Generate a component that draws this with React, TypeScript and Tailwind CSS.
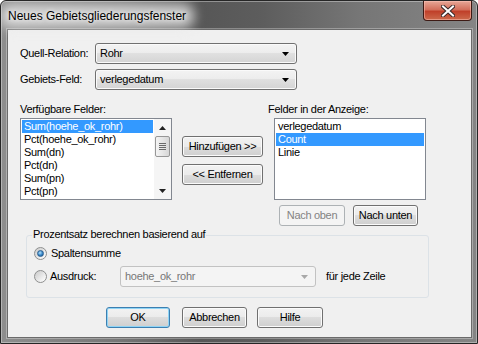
import type { ReactNode } from 'react'

function Arrow({ up = false, color = '#000' }: { up?: boolean; color?: string }) {
  return (
    <svg width="7" height="4" viewBox="0 0 7 4">
      <path d={up ? 'M0 4H7L3.5 0Z' : 'M0 0H7L3.5 4Z'} fill={color} />
    </svg>
  )
}

function Combo({ value, className = '', disabled = false }: { value: string; className?: string; disabled?: boolean }) {
  return (
    <div
      className={`flex h-[21px] items-center justify-between rounded-[3px] border pl-[4px] pr-[7px] ${
        disabled
          ? 'border-[#c2c2c2] bg-[#f4f4f4] text-[#777]'
          : 'border-[#707070] bg-[linear-gradient(#f3f3f3,#ececec_50%,#e0e0e0_50%,#d4d4d4)] text-black shadow-[inset_0_0_0_1px_#fafafa]'
      } ${className}`}
    >
      <span>{value}</span>
      <Arrow color={disabled ? '#a8a8a8' : '#000'} />
    </div>
  )
}

function Btn({ children, className = '', disabled = false, primary = false }: { children: ReactNode; className?: string; disabled?: boolean; primary?: boolean }) {
  const tone = disabled
    ? 'border-[#adb2b5] bg-[#f4f4f4] text-[#838383]'
    : primary
      ? 'border-[#3c7fb1] bg-[linear-gradient(#f2f2f2,#ebebeb_50%,#dddddd_50%,#cfcfcf)] shadow-[inset_0_0_0_1px_#8fd4f5] text-black'
      : 'border-[#707070] bg-[linear-gradient(#f2f2f2,#ebebeb_50%,#dddddd_50%,#cfcfcf)] shadow-[inset_0_0_0_1px_#fbfbfb] text-black'
  return (
    <div className={`flex h-[21px] items-center justify-center rounded-[3px] border ${tone} ${className}`}>{children}</div>
  )
}

function Radio({ checked = false }: { checked?: boolean }) {
  return (
    <span className="flex h-[13px] w-[13px] shrink-0 items-center justify-center rounded-full border border-[#8e8f8f] bg-[linear-gradient(135deg,#c9c9c9,#f4f4f4_75%,#ffffff)]">
      {checked && (
        <span className="h-[7px] w-[7px] rounded-full border border-[#2b5f8f] bg-[radial-gradient(circle_at_40%_35%,#b5e2fb,#3585c8_55%,#174e80)]" />
      )}
    </span>
  )
}

function ScrollBar() {
  return (
    <div className="flex w-[17px] flex-col bg-[#f5f5f5]">
      <div className="flex h-[17px] items-center justify-center">
        <Arrow up color="#222" />
      </div>
      <div className="mx-auto flex h-[21px] w-[15px] flex-col items-center justify-center gap-[1px] rounded-[2px] border border-[#979797] bg-[linear-gradient(90deg,#f4f4f4,#e6e6e6_50%,#d6d6d6)]">
        <span className="h-px w-[7px] bg-[#6a6a6a]" />
        <span className="h-px w-[7px] bg-[#6a6a6a]" />
        <span className="h-px w-[7px] bg-[#6a6a6a]" />
        <span className="h-px w-[7px] bg-[#6a6a6a]" />
      </div>
      <div className="flex-1" />
      <div className="flex h-[17px] items-center justify-center">
        <Arrow color="#222" />
      </div>
    </div>
  )
}

function ListBox({ items, selected, scroll = false, className = '' }: { items: string[]; selected: number; scroll?: boolean; className?: string }) {
  return (
    <div className={`flex h-[82px] w-[152px] border border-[#828790] bg-white ${className}`}>
      <div className="flex-1 overflow-hidden p-px">
        {items.map((it, i) => (
          <div key={it} className={`h-[13px] whitespace-nowrap pl-[2px] leading-[13px] ${i === selected ? 'bg-[#3399ff] text-white' : 'text-black'}`}>
            {it}
          </div>
        ))}
      </div>
      {scroll && <ScrollBar />}
    </div>
  )
}

export default function App() {
  return (
    <div className="relative h-[344px] w-[478px] overflow-hidden rounded-t-[6px] border border-[#262626] bg-[linear-gradient(90deg,#8e8e8e_0%,#767676_25%,#575757_42%,#5d5d5d_55%,#767676_75%,#858585_100%)] font-['Liberation_Sans',Arial,sans-serif] text-[11px] tracking-[-0.3px] text-black shadow-[inset_0_0_0_1px_rgba(255,255,255,0.35)]">
      <div className="flex h-[28px] items-center pl-[7px] pt-px">
        <span className="relative text-[12px] tracking-normal text-black">
          <span className="absolute -inset-x-[8px] -inset-y-[3px] rounded-[10px] bg-[#e8e8e8]/80 blur-[6px]" />
          <span className="relative [text-shadow:0_0_4px_#fff]">Neues Gebietsgliederungsfenster</span>
        </span>
      </div>

      <div className="absolute left-[422px] top-0 flex h-[20px] w-[49px] items-center justify-center rounded-b-[4px] border border-t-0 border-[#3d1a14] bg-[linear-gradient(#e7a797,#d3705c_45%,#c0402a_55%,#cc6a4c)] shadow-[inset_0_0_0_1px_rgba(255,200,190,0.5)]">
        <svg width="14" height="12" viewBox="0 0 14 12">
          <path d="M2 1.5L12 10.5M12 1.5L2 10.5" stroke="#3a2a2a" strokeWidth="4" strokeLinecap="square" />
          <path d="M2 1.5L12 10.5M12 1.5L2 10.5" stroke="#fff" strokeWidth="2" strokeLinecap="square" />
        </svg>
      </div>

      <div className="ml-[6px] h-[309px] w-[465px] border border-[#6b6b6b] bg-[#f0f0f0] shadow-[0_0_0_1px_rgba(255,255,255,0.3)]">
        <div className="pl-[12px] pt-[13px]">
          <div className="flex h-[21px] items-center">
            <span className="w-[75px]">Quell-Relation:</span>
            <Combo className="w-[202px]" value="Rohr" />
          </div>
          <div className="mt-[5px] flex h-[21px] items-center">
            <span className="w-[75px]">Gebiets-Feld:</span>
            <Combo className="w-[202px]" value="verlegedatum" />
          </div>

          <div className="mt-[13px] flex items-start">
            <div className="w-[152px]">
              <div className="h-[13px] leading-[13px]">Verfügbare Felder:</div>
              <ListBox
                className="mt-[2px]"
                scroll
                selected={0}
                items={['Sum(hoehe_ok_rohr)', 'Pct(hoehe_ok_rohr)', 'Sum(dn)', 'Pct(dn)', 'Sum(pn)', 'Pct(pn)']}
              />
            </div>
            <div className="ml-[10px] mt-[33px] w-[81px]">
              <Btn>Hinzufügen &gt;&gt;</Btn>
              <Btn className="mt-[7px]">&lt;&lt; Entfernen</Btn>
            </div>
            <div className="ml-[5px]">
              <div className="h-[13px] leading-[13px]">Felder in der Anzeige:</div>
              <ListBox className="ml-[6px] mt-[2px]" selected={1} items={['verlegedatum', 'Count', 'Linie']} />
              <div className="ml-[11px] mt-[5px] flex">
                <Btn disabled className="w-[66px]">Nach oben</Btn>
                <Btn className="ml-[8px] w-[65px]">Nach unten</Btn>
              </div>
            </div>
          </div>

          <div className="relative ml-[6px] mt-[9px] h-[63px] w-[403px] rounded-[3px] border border-[#dce2e7]">
            <span className="absolute left-[5px] top-[-8px] bg-[#f0f0f0] px-px leading-[13px]">
              Prozentsatz berechnen basierend auf
            </span>
            <div className="mt-[11px] flex h-[13px] items-center pl-[7px]">
              <Radio checked />
              <span className="ml-[4px]">Spaltensumme</span>
            </div>
            <div className="mt-[6px] flex h-[21px] items-center pl-[7px]">
              <Radio />
              <span className="ml-[3px] w-[70px]">Ausdruck:</span>
              <Combo disabled className="w-[196px]" value="hoehe_ok_rohr" />
              <span className="ml-[10px]">für jede Zeile</span>
            </div>
          </div>

          <div className="mt-[9px] flex">
            <Btn primary className="ml-[86px] w-[64px]">OK</Btn>
            <Btn className="ml-[12px] w-[65px]">Abbrechen</Btn>
            <Btn className="ml-[10px] w-[66px]">Hilfe</Btn>
          </div>
        </div>
      </div>
    </div>
  )
}
